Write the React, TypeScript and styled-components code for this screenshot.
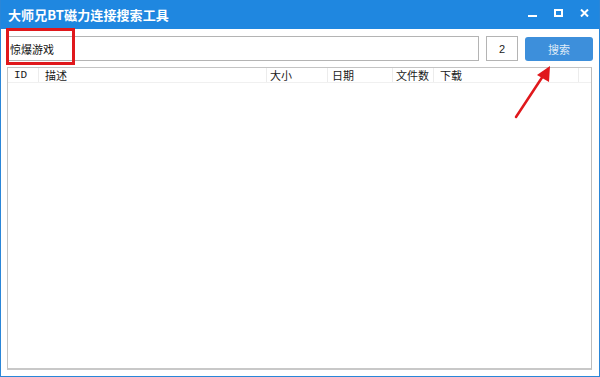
import React from "react";
import styled, { createGlobalStyle } from "styled-components";

const Global = createGlobalStyle`
  html, body { margin: 0; padding: 0; background: #ffffff; }
  body { font-family: "Noto Sans CJK SC", "Liberation Sans", sans-serif; }
  * { box-sizing: border-box; }
`;

const Window = styled.div`
  position: relative;
  width: 600px;
  height: 377px;
  display: flex;
  flex-direction: column;
  background: #ffffff;
  border: 1px solid #2a86d8;
  border-top: none;
  overflow: hidden;
`;

const TitleBar = styled.div`
  height: 29px;
  flex: none;
  background: #1f87e0;
  display: flex;
  align-items: center;
  padding-left: 8px;
  padding-right: 11px;
  margin: 0 -1px;
`;

const Title = styled.div`
  flex: 1;
  color: #ffffff;
  font-size: 13px;
  font-weight: 700;
  letter-spacing: 0.1px;
  line-height: 1;
`;

const Controls = styled.div`
  height: 29px;
  padding-top: 9px;
  display: flex;
  align-items: flex-start;
  gap: 17px;
`;

const CtrlButton = styled.div`
  width: 9px;
  height: 8px;
  display: flex;
`;

const Body = styled.div`
  flex: 1;
  display: flex;
  flex-direction: column;
  padding: 7px 6px 6px 6px;
  gap: 6px;
`;

const SearchRow = styled.div`
  display: flex;
  align-items: center;
  height: 25px;
`;

const TextField = styled.div`
  width: 473px;
  height: 25px;
  border: 1px solid #b4b4b4;
  display: flex;
  align-items: center;
  padding-left: 2px;
  font-size: 11px;
  color: #111;
`;

const CountField = styled.div`
  margin-left: 7px;
  width: 32px;
  height: 25px;
  border: 1px solid #b4b4b4;
  display: flex;
  align-items: center;
  justify-content: center;
  font-family: "Liberation Sans", sans-serif;
  font-size: 11px;
  color: #222;
`;

const SearchButton = styled.div`
  margin-left: 7px;
  width: 68px;
  height: 24px;
  border-radius: 3px;
  background: #3d8fdb;
  color: #dfeaf7;
  display: flex;
  align-items: center;
  justify-content: center;
  font-size: 11px;
`;

const List = styled.div`
  flex: 1;
  border: 1px solid #c4c4c4;
  border-right-color: #bdbdbd;
  border-bottom: 2px solid #c8c8c8;
  display: flex;
  flex-direction: column;
  margin-right: 1px;
`;

const HeaderRow = styled.div`
  height: 15px;
  display: flex;
  border-bottom: 1px solid #f0f0f0;
`;

const HeaderCell = styled.div<{ $w: number; $pad: number; $mono?: boolean }>`
  width: ${(p) => p.$w}px;
  flex: none;
  padding-left: ${(p) => p.$pad}px;
  border-right: 1px solid #ececec;
  font-family: ${(p) =>
    p.$mono ? '"Liberation Mono", monospace' : '"Noto Sans CJK SC", sans-serif'};
  font-size: 11px;
  line-height: 15px;
  color: #1a1a1a;
  white-space: nowrap;
`;

const HeaderFill = styled.div`
  flex: 1;
`;

const Highlight = styled.div`
  position: absolute;
  left: 5px;
  top: 28px;
  width: 69px;
  height: 37px;
  border: 3px solid #e0181c;
`;

const ArrowSvg = styled.svg`
  position: absolute;
  left: 505px;
  top: 60px;
`;

const columns = [
  { label: "ID", w: 31, pad: 6, mono: true },
  { label: "描述", w: 228, pad: 6 },
  { label: "大小", w: 61, pad: 3 },
  { label: "日期", w: 65, pad: 4 },
  { label: "文件数", w: 41, pad: 3 },
  { label: "下载", w: 145, pad: 6 },
];

export default function App() {
  return (
    <>
      <Global />
      <Window>
        <TitleBar>
          <Title>大师兄BT磁力连接搜索工具</Title>
          <Controls>
            <CtrlButton>
              <svg width="9" height="8" viewBox="0 0 9 8">
                <rect x="0" y="6" width="9" height="2" fill="#fff" />
              </svg>
            </CtrlButton>
            <CtrlButton>
              <svg width="9" height="8" viewBox="0 0 9 8">
                <rect x="1" y="1" width="7" height="6" fill="none" stroke="#fff" strokeWidth="2" />
              </svg>
            </CtrlButton>
            <CtrlButton>
              <svg width="9" height="8" viewBox="0 0 9 8">
                <path d="M1 0.5 L8 7.5 M8 0.5 L1 7.5" stroke="#fff" strokeWidth="2" />
              </svg>
            </CtrlButton>
          </Controls>
        </TitleBar>
        <Body>
          <SearchRow>
            <TextField>惊爆游戏</TextField>
            <CountField>2</CountField>
            <SearchButton>搜索</SearchButton>
          </SearchRow>
          <List>
            <HeaderRow>
              {columns.map((c) => (
                <HeaderCell key={c.label} $w={c.w} $pad={c.pad} $mono={c.mono}>
                  {c.label}
                </HeaderCell>
              ))}
              <HeaderFill />
            </HeaderRow>
          </List>
        </Body>
        <Highlight />
        <ArrowSvg width="60" height="70" viewBox="0 0 60 70">
          <line x1="10" y1="57" x2="39" y2="13" stroke="#e0181c" strokeWidth="2.5" strokeLinecap="round" />
          <polygon points="44,6 43,22 31,15" fill="#e0181c" />
        </ArrowSvg>
      </Window>
    </>
  );
}
